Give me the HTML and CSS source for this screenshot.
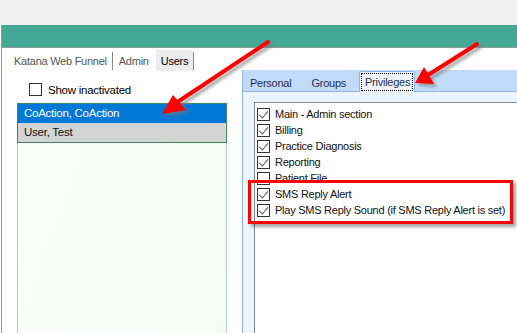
FILE: index.html
```html
<!DOCTYPE html>
<html>
<head>
<meta charset="utf-8">
<link rel="stylesheet" href="styles.css">
</head>
<body>
<div class="topstrip"></div>
<div class="window">
  <div class="titlebar"></div>
  <div class="main">
    <div class="left">
      <div class="ltabs">
        <span class="ltab">Katana Web Funnel</span>
        <span class="lsep"></span>
        <span class="ltab">Admin</span>
        <span class="ltab active">Users</span>
        <span class="lsep"></span>
      </div>
      <label class="showinact"><span class="box"></span><span>Show inactivated</span></label>
      <div class="userlist">
        <div class="items">
          <div class="uitem sel">CoAction, CoAction</div>
          <div class="uitem">User, Test</div>
        </div>
      </div>
    </div>
    <div class="right">
      <div class="rtabs">
        <span class="rtab">Personal</span>
        <span class="rtab">Groups</span>
        <span class="rtab active"><span class="focus">Privileges</span></span>
      </div>
      <div class="rpanel">
        <div class="privlist">
          <div class="prow"><span class="cb on"></span>Main - Admin section</div>
          <div class="prow"><span class="cb on"></span>Billing</div>
          <div class="prow"><span class="cb on"></span>Practice Diagnosis</div>
          <div class="prow"><span class="cb on"></span>Reporting</div>
          <div class="prow"><span class="cb"></span>Patient File</div>
          <div class="prow"><span class="cb on"></span>SMS Reply Alert</div>
          <div class="prow"><span class="cb on"></span>Play SMS Reply Sound (if SMS Reply Alert is set)</div>
        </div>
      </div>
    </div>
  </div>
</div>
<div class="redbox"></div>
<svg class="arrows" width="517" height="333" viewBox="0 0 517 333">
  <defs>
    <filter id="sh" x="-20%" y="-20%" width="140%" height="140%">
      <feGaussianBlur stdDeviation="1.5"/>
    </filter>
  </defs>
  <g fill="#777" stroke="#777" opacity="0.6" filter="url(#sh)" transform="translate(3,3)">
    <line x1="268" y1="42" x2="176" y2="103" stroke-width="4" stroke-linecap="round"/>
    <polygon points="162,114 173,95 186,110" stroke="none"/>
    <line x1="477" y1="44" x2="428" y2="75" stroke-width="4" stroke-linecap="round"/>
    <polygon points="415,83 424,67 434,84" stroke="none"/>
  </g>
  <g fill="#f00" stroke="#f00">
    <line x1="268" y1="42" x2="176" y2="103" stroke-width="4" stroke-linecap="round"/>
    <polygon points="162,114 173,95 186,110" stroke="none"/>
    <line x1="477" y1="44" x2="428" y2="75" stroke-width="4" stroke-linecap="round"/>
    <polygon points="415,83 424,67 434,84" stroke="none"/>
  </g>
</svg>
</body>
</html>
```
FILE: styles.css
```css
* { box-sizing: border-box; }
html, body { margin: 0; padding: 0; }
body {
  width: 517px;
  height: 333px;
  overflow: hidden;
  background: #fff;
  font-family: "Liberation Sans", Arial, sans-serif;
  font-size: 11px;
  letter-spacing: -0.25px;
  color: #000;
  position: relative;
}
.topstrip { height: 25px; background: #f1f1f1; }
.window {
  margin-left: 1px;
  border-left: 1px solid #9a9a9a;
  height: 308px;
  overflow: hidden;
}
.titlebar {
  height: 23px;
  background: #45a897;
  border-bottom: 1px solid #8c9c98;
}
.main { display: flex; height: 285px; }
.left { width: 240px; flex: none; display: flex; flex-direction: column; }
.ltabs {
  display: flex;
  align-items: stretch;
  height: 21px;
  margin-top: 2px;
  padding-left: 10px;
  color: #555;
}
.ltab { display: flex; align-items: center; padding: 0 5px 0 2px; }
.ltab + .lsep + .ltab { padding-left: 6px; }
.ltab.active { background: #ececec; color: #000; padding: 0 5px 0 5px; margin-left: 2px; }
.lsep { width: 1px; background: #8a8a8a; margin: 2px 0 1px 0; }
.showinact { display: flex; align-items: center; margin: 12px 0 0 27px; height: 13px; font-size: 11.5px; }
.showinact .box { width: 13px; height: 13px; border: 1px solid #333; background: #fff; margin-right: 6px; }
.userlist {
  margin: 7px 0 0 15px;
  width: 210px;
  flex: 1;
  border: 1px solid #b9c7d6;
  border-bottom: none;
  background: linear-gradient(110deg, #fbfefb, #f3fcf3);
}
.items { border: 1px solid #3d8a57; margin: -1px; }
.uitem { height: 19px; line-height: 18px; padding-left: 6px; background: #d4d4d4; color: #111; font-size: 11.5px; }
.uitem.sel { background: #0078d7; color: #fff; }
.right { flex: 1; display: flex; flex-direction: column; margin-top: 22px; }
.rtabs {
  height: 22px;
  background: #c2dbf9;
  border-left: 1px solid #8fb5e6;
  border-bottom: 1px solid #8fb5e6;
  display: flex;
  align-items: flex-end;
  padding-left: 5px;
  color: #1d2d4c;
}
.rtab { padding: 0 6px 2px 2px; margin-right: 12px; }
.rtab.active {
  background: #f0f6fe;
  border: 1px solid #8fb5e6;
  border-bottom: none;
  border-radius: 2px 2px 0 0;
  padding: 1px 1px 1px 1px;
  margin-left: -5px;
  margin-bottom: -1px;
  height: 21px;
}
.focus { border: 1px dotted #000; padding: 0 2px 0 3px; display: block; line-height: 16px; }
.rpanel {
  flex: 1;
  background: #ecf4fd;
  border-left: 1px solid #8fb5e6;
  padding: 10px 0 0 11px;
}
.privlist {
  height: 100%;
  background: #fff;
  border-left: 1px solid #828790;
  border-top: 1px solid #828790;
  padding: 3px 0 0 2px;
  margin-right: -20px;
}
.prow { height: 16px; display: flex; align-items: center; white-space: nowrap; color: #111; }
.cb {
  width: 13px; height: 13px;
  border: 1px solid #333;
  background: #fff;
  margin-right: 5px;
  flex: none;
  position: relative;
}
.cb.on::after {
  content: "";
  position: absolute;
  left: 3px; top: 0px;
  width: 4px; height: 8px;
  border: solid #555;
  border-width: 0 1.5px 1.5px 0;
  transform: rotate(40deg);
}
.redbox {
  position: absolute;
  left: 248px; top: 180px;
  width: 265px; height: 44px;
  border: 3.5px solid #ff0000;
  box-shadow: 3px 3px 3px rgba(0,0,0,0.35);
}
.arrows { position: absolute; left: 0; top: 0; pointer-events: none; }
```
